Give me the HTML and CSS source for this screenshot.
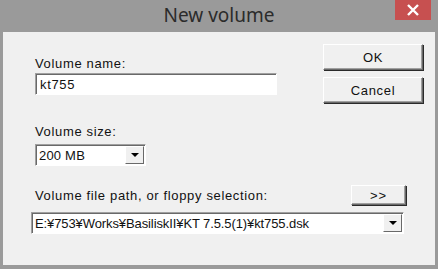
FILE: index.html
```html
<!DOCTYPE html>
<html lang="en">
<head>
    <meta charset="UTF-8">
    <title>New volume</title>
    <link rel="stylesheet" href="styles.css">
</head>
<body>
    <div class="window">
        <div class="titlebar">
            <span class="title">New volume</span>
            <div class="close">
                <svg width="14" height="12" viewBox="0 0 14 12">
                    <path d="M2 1 L12 11 M12 1 L2 11" stroke="#fff" stroke-width="2.4"/>
                </svg>
            </div>
        </div>
        <div class="client">
            <div class="top">
                <div class="fields">
                    <label class="label name-label">Volume name:</label>
                    <div class="textbox">kt755</div>
                    <label class="label size-label">Volume size:</label>
                    <div class="combo size-combo">
                        <span class="combo-text">200 MB</span>
                        <span class="drop"><span class="arrow"></span></span>
                    </div>
                </div>
                <div class="buttons">
                    <div class="btn">OK</div>
                    <div class="btn">Cancel</div>
                </div>
            </div>
            <div class="path-row">
                <label class="label">Volume file path, or floppy selection:</label>
                <div class="btn small">&gt;&gt;</div>
            </div>
            <div class="combo path-combo">
                <span class="combo-text">E:¥753¥Works¥BasiliskII¥KT 7.5.5(1)¥kt755.dsk</span>
                <span class="drop"><span class="arrow"></span></span>
            </div>
        </div>
    </div>
</body>
</html>
```

FILE: styles.css
```css
body {
    margin: 0;
    background-color: #9a9a9a;
    font-family: "Liberation Sans", Arial, sans-serif;
}
.window {
    width: 438px;
    height: 269px;
}
.titlebar {
    height: 32px;
    display: flex;
    justify-content: center;
    align-items: center;
    position: relative;
}
.title {
    font-family: "Noto Sans", sans-serif;
    font-size: 19px;
    color: #2b2b2b;
    margin-top: -2px;
}
.close {
    position: absolute;
    top: 0;
    right: 7px;
    width: 36px;
    height: 20px;
    background-color: #c75050;
    display: flex;
    justify-content: center;
    align-items: center;
}
.client {
    margin: 0 3px;
    height: 233px;
    background-color: #f0f0f0;
    box-sizing: border-box;
    padding: 12px 0 0 28px;
    font-size: 13px;
    letter-spacing: 0.65px;
    color: #111;
}
.top {
    display: flex;
}
.fields {
    width: 290px;
    padding-left: 4px;
}
.label {
    display: block;
    height: 15px;
    line-height: 15px;
}
.name-label {
    margin-top: 12px;
    margin-bottom: 2px;
}
.textbox {
    width: 242px;
    height: 22px;
    box-sizing: border-box;
    background: #fff;
    border: 1px solid;
    border-color: #a0a0a0 #fff #fff #a0a0a0;
    box-shadow: inset 1px 1px 0 #696969;
    padding: 3px 4px;
    line-height: 15px;
}
.size-label {
    margin-top: 29px;
    margin-bottom: 5px;
}
.combo {
    display: flex;
    height: 22px;
    box-sizing: border-box;
    background: #fff;
    border: 1px solid;
    border-color: #a0a0a0 #fff #fff #a0a0a0;
    box-shadow: inset 1px 1px 0 #696969;
}
.combo-text {
    flex: 1;
    padding: 3px 3px;
    line-height: 15px;
    white-space: nowrap;
    overflow: hidden;
    letter-spacing: 0.2px;
}
.path-combo .combo-text {
    letter-spacing: -0.1px;
}
.size-combo {
    width: 111px;
}
.drop {
    width: 19px;
    height: 18px;
    margin: 1px 1px 1px 0;
    box-sizing: border-box;
    background: #f0f0f0;
    border: 1px solid;
    border-color: #fff #696969 #696969 #fff;
    display: flex;
    justify-content: center;
    align-items: center;
}
.arrow {
    width: 0;
    height: 0;
    border-left: 4px solid transparent;
    border-right: 4px solid transparent;
    border-top: 4px solid #000;
}
.buttons {
    display: flex;
    flex-direction: column;
    gap: 7px;
    margin-left: -2px;
}
.btn {
    width: 100px;
    height: 26px;
    box-sizing: border-box;
    background: #f0f0f0;
    border: 1px solid;
    border-color: #fff #696969 #696969 #fff;
    box-shadow: inset -1px -1px 0 #a0a0a0, 1px 1px 0 #2a2a2a;
    display: flex;
    justify-content: center;
    align-items: center;
}
.path-row {
    display: flex;
    align-items: center;
    margin-top: 19px;
    padding-left: 4px;
    width: 371px;
    justify-content: space-between;
}
.btn.small {
    width: 55px;
    height: 20px;
    letter-spacing: 1px;
}
.path-combo {
    width: 373px;
    margin-top: 7px;
}
```
